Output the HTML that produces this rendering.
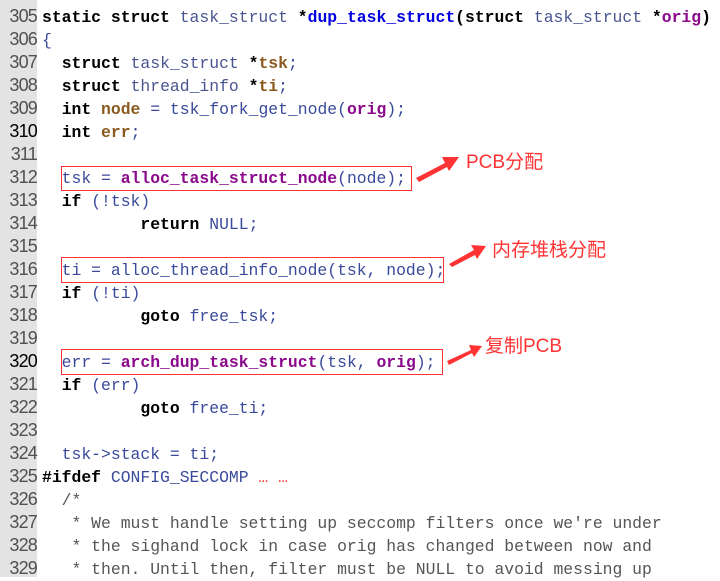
<!DOCTYPE html>
<html><head><meta charset="utf-8"><style>
body{margin:0;width:720px;height:577px;background:#fff;overflow:hidden;position:relative}
#g{position:absolute;left:0;top:0;width:37px;height:577px;background:#e3e3e3}
.l{position:absolute;left:0;height:23px;line-height:23px;white-space:pre;font-family:"Liberation Mono",monospace;font-size:16.4px;color:#3a4a9a}
.n{display:inline-block;width:42px;text-align:right;color:#505050;font-family:"Liberation Sans",sans-serif;font-size:18px;letter-spacing:-0.8px;padding-right:5px;box-sizing:border-box}
.k{color:#000;font-weight:bold}
.t{color:#4a5590}
.v{color:#8a5a20;font-weight:bold}
.f{color:#0000e0;font-weight:bold}
.p{color:#8b0a8b;font-weight:bold}
.c{color:#555}
.r{color:#f33}
.box{position:absolute;border:1.5px solid #f33;box-sizing:border-box}
.lab{position:absolute;color:#f33;font-family:"Liberation Sans","Noto Sans CJK SC",sans-serif;font-size:19px;line-height:22px}
</style></head><body>
<div id="g"></div>
<div class="l" style="top:5px"><span class="n">305</span><span class="k">static struct</span> <span class="t">task_struct</span> <span class="k">*</span><span class="f">dup_task_struct</span><span class="k">(struct</span> <span class="t">task_struct</span> <span class="k">*</span><span class="p">orig</span><span class="k">)</span></div>
<div class="l" style="top:28px"><span class="n">306</span>{</div>
<div class="l" style="top:51px"><span class="n">307</span>  <span class="k">struct</span> <span class="t">task_struct</span> <span class="k">*</span><span class="v">tsk</span>;</div>
<div class="l" style="top:74px"><span class="n">308</span>  <span class="k">struct</span> <span class="t">thread_info</span> <span class="k">*</span><span class="v">ti</span>;</div>
<div class="l" style="top:97px"><span class="n">309</span>  <span class="k">int</span> <span class="v">node</span> = tsk_fork_get_node(<span class="p">orig</span>);</div>
<div class="l" style="top:120px"><span class="n" style="color:#000">310</span>  <span class="k">int</span> <span class="v">err</span>;</div>
<div class="l" style="top:143px"><span class="n">311</span></div>
<div class="l" style="top:166px"><span class="n">312</span>  tsk = <span class="p">alloc_task_struct_node</span>(node);</div>
<div class="l" style="top:189px"><span class="n">313</span>  <span class="k">if</span> (!tsk)</div>
<div class="l" style="top:212px"><span class="n">314</span>          <span class="k">return</span> NULL;</div>
<div class="l" style="top:235px"><span class="n">315</span></div>
<div class="l" style="top:258px"><span class="n">316</span>  ti = alloc_thread_info_node(tsk, node);</div>
<div class="l" style="top:281px"><span class="n">317</span>  <span class="k">if</span> (!ti)</div>
<div class="l" style="top:304px"><span class="n">318</span>          <span class="k">goto</span> free_tsk;</div>
<div class="l" style="top:327px"><span class="n">319</span></div>
<div class="l" style="top:350px"><span class="n" style="color:#000">320</span>  err = <span class="p">arch_dup_task_struct</span>(tsk, <span class="p">orig</span>);</div>
<div class="l" style="top:373px"><span class="n">321</span>  <span class="k">if</span> (err)</div>
<div class="l" style="top:396px"><span class="n">322</span>          <span class="k">goto</span> free_ti;</div>
<div class="l" style="top:419px"><span class="n">323</span></div>
<div class="l" style="top:442px"><span class="n">324</span>  tsk-&gt;stack = ti;</div>
<div class="l" style="top:465px"><span class="n">325</span><span class="k">#ifdef</span> CONFIG_SECCOMP <span class="r">… …</span></div>
<div class="l c" style="top:488px"><span class="n">326</span>  /*</div>
<div class="l c" style="top:511px"><span class="n">327</span>   * We must handle setting up seccomp filters once we're under</div>
<div class="l c" style="top:534px"><span class="n">328</span>   * the sighand lock in case orig has changed between now and</div>
<div class="l c" style="top:557px"><span class="n">329</span>   * then. Until then, filter must be NULL to avoid messing up</div>
<div class="box" style="left:61px;top:166px;width:351px;height:25px"></div>
<div class="box" style="left:61px;top:257px;width:383px;height:26px"></div>
<div class="box" style="left:61px;top:349px;width:382px;height:26px"></div>
<svg style="position:absolute;left:0;top:0" width="720" height="577">
<polygon points="416,178 445,163 442,157 459,157 449,171 447,167 419,182" fill="#f33"/>
<polygon points="449,264 474,250 471,245 486,246 477,259 475,255 452,267" fill="#f33"/>
<polygon points="447,361 471,350 469,345 482,346 474,357 472,353 449,365" fill="#f33"/>
</svg>
<div class="lab" style="left:466px;top:152px">PCB分配</div>
<div class="lab" style="left:492px;top:240px">内存堆栈分配</div>
<div class="lab" style="left:485px;top:336px">复制PCB</div>
</body></html>
